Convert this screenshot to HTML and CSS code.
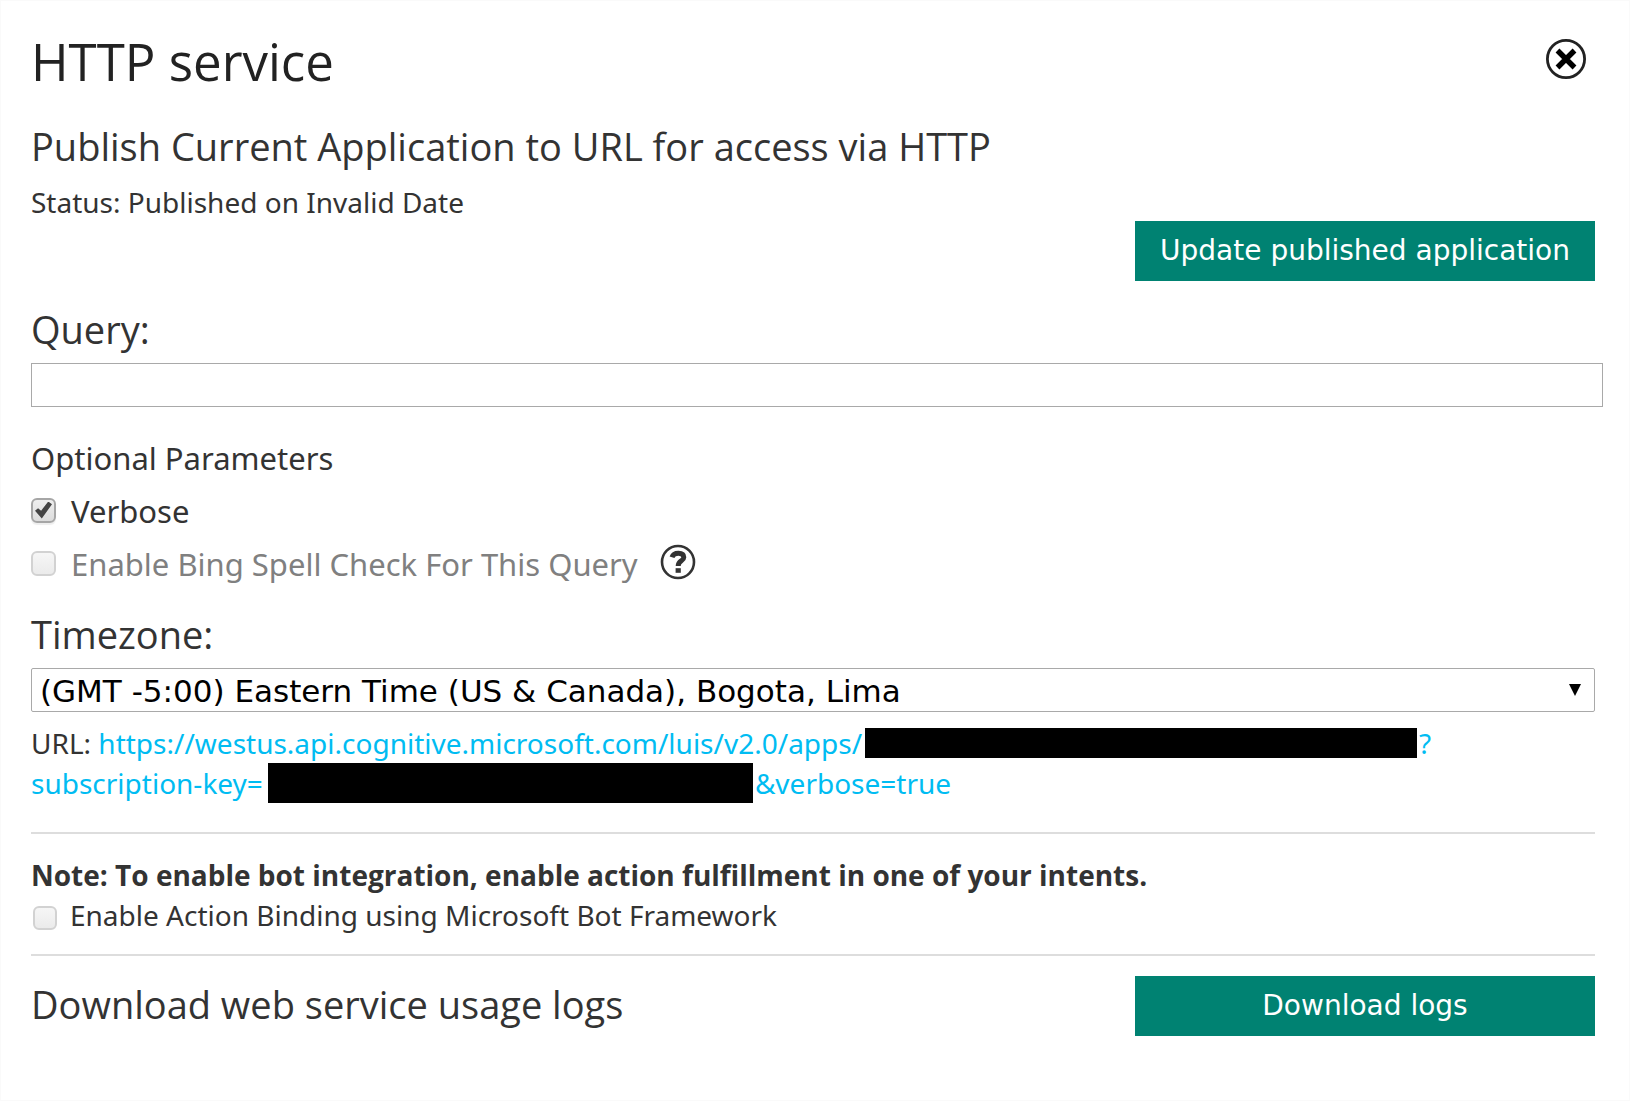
FILE: index.html
```
<!DOCTYPE html>
<html lang="en">
<head>
<meta charset="utf-8">
<title>HTTP service</title>
<link rel="stylesheet" href="styles.css">
</head>
<body>
<main class="panel">
  <header class="panel-header">
    <h1 class="title">HTTP service</h1>
    <button class="icon-button close" type="button" aria-label="Close">
      <svg width="40" height="40" viewBox="0 0 40 40" aria-hidden="true">
        <circle cx="20" cy="20" r="18.6" fill="none" stroke="#222" stroke-width="2.8"/>
        <path d="M11.5 11.5L28.5 28.5M28.5 11.5L11.5 28.5" fill="none" stroke="#000" stroke-width="5.4"/>
      </svg>
    </button>
  </header>

  <section class="publish">
    <h2 class="heading">Publish Current Application to URL for access via HTTP</h2>
    <p class="status">Status: Published on Invalid Date</p>
    <button class="action" type="button">Update published application</button>
  </section>

  <form class="query-form">
    <label class="heading" for="query">Query:</label>
    <input class="query" id="query" type="text">

    <fieldset class="options">
      <legend class="option-text">Optional Parameters</legend>
      <div class="option">
        <input class="check" id="verbose" type="checkbox" checked>
        <label class="option-text" for="verbose">Verbose</label>
      </div>
      <div class="option">
        <input class="check" id="spell" type="checkbox" disabled>
        <label class="option-text muted" for="spell">Enable Bing Spell Check For This Query</label>
        <button class="icon-button" type="button" aria-label="Help">
          <svg width="36" height="36" viewBox="0 0 36 36" aria-hidden="true">
            <circle cx="18" cy="18" r="16" fill="none" stroke="#333" stroke-width="2.6"/>
            <path d="M12 13.2C13 10.2 15.4 9.2 18.4 9.2C22 9.2 23.8 10.8 23.8 13.2C23.8 17 18.2 16.8 18.2 22" fill="none" stroke="#333" stroke-width="5"/>
            <path d="M15.6 24.2h5.2v4.6h-5.2z" fill="#333"/>
          </svg>
        </button>
      </div>
    </fieldset>

    <label class="heading" for="timezone">Timezone:</label>
    <div class="select-wrap">
      <select class="timezone" id="timezone">
        <option>(GMT -5:00) Eastern Time (US &amp; Canada), Bogota, Lima</option>
      </select>
      <svg class="arrow" width="12" height="12" viewBox="0 0 12 12" aria-hidden="true"><path d="M0 0H12L6 12Z"/></svg>
    </div>
  </form>

  <p class="url">URL: <a class="link" href="#">https://westus.api.cognitive.microsoft.com/luis/v2.0/apps/<span class="redacted app-id"></span>?<br>subscription-key=<span class="redacted key"></span>&amp;verbose=true</a></p>

  <section class="bot">
    <p class="note">Note: To enable bot integration, enable action fulfillment in one of your intents.</p>
    <div class="binding">
      <input class="check" id="binding" type="checkbox" disabled>
      <label for="binding">Enable Action Binding using Microsoft Bot Framework</label>
    </div>
  </section>

  <section class="logs">
    <h2 class="heading">Download web service usage logs</h2>
    <button class="action" type="button">Download logs</button>
  </section>
</main>
</body>
</html>
```
FILE: styles.css
```
* {
  box-sizing: border-box;
}

body {
  margin: 0;
  background: #fff;
  color: #333;
  font: 28px/40px "Noto Sans", "Open Sans", sans-serif;
}

h1, h2, p {
  margin: 0;
  font-weight: 400;
}

.panel {
  min-height: 100vh;
  padding: 28px 34px 28px 30px;
  border: 1px solid #fafafa;
}

.panel-header {
  display: flex;
  justify-content: space-between;
  align-items: flex-start;
  padding-right: 9px;
}

.title {
  color: #222;
  font-family: "Open Sans", sans-serif;
  font-size: 51px;
  line-height: 64px;
}

.icon-button {
  display: flex;
  padding: 0;
  border: 0;
  background: none;
}

.close {
  margin-top: 10px;
}

.heading {
  display: block;
  font-family: "Open Sans", sans-serif;
  font-size: 38px;
  line-height: 56px;
}

.publish {
  display: flex;
  flex-direction: column;
  margin-top: 25px;
}

.status {
  margin-top: 8px;
}

.action {
  align-self: flex-end;
  width: 460px;
  height: 60px;
  padding: 0;
  border: 0;
  background: #008272;
  color: #fff;
  font: 28px/40px "DejaVu Sans", sans-serif;
}

.publish .action {
  margin-top: -1px;
}

.query-form {
  margin-top: 20px;
}

.query {
  display: block;
  width: calc(100% + 8px);
  height: 44px;
  margin-top: 6px;
  padding: 0 8px;
  border: 1px solid #a9a9a9;
  font: inherit;
}

.options {
  display: flex;
  flex-direction: column;
  gap: 9px;
  margin: 29px 0 20px;
  padding: 0;
  border: 0;
}

.options legend {
  padding: 0 0 9px;
}

.option-text {
  font-size: 31px;
  line-height: 44px;
}

.muted {
  color: #808080;
}

.option {
  display: flex;
  align-items: center;
}

.option .icon-button {
  margin: 0 0 4px 22px;
}

.check {
  appearance: none;
  display: grid;
  place-items: center;
  width: 25px;
  height: 25px;
  margin: 0 15px 2px 0;
  border: 2px solid #a6a6a6;
  border-radius: 6px;
  background: linear-gradient(#eee, #dcdcdc);
  box-shadow: 0 2px 1px #eee;
}

.check:disabled {
  border-color: #d2d2d2;
  background: linear-gradient(#f6f6f6, #ebebeb);
  box-shadow: none;
}

.check:checked::before {
  content: "";
  width: 17px;
  height: 17px;
  background: #444;
  clip-path: polygon(0 55%, 18% 40%, 36% 54%, 78% 0, 100% 16%, 40% 100%);
}

.select-wrap {
  display: grid;
  align-items: center;
  margin-top: 6px;
}

.select-wrap > * {
  grid-area: 1 / 1;
}

.timezone {
  appearance: none;
  width: 100%;
  height: 44px;
  padding: 2px 40px 0 8px;
  border: 1px solid #a9a9a9;
  border-radius: 2px;
  background: #fff;
  color: #000;
  font: 31px/40px "DejaVu Sans", sans-serif;
}

.arrow {
  justify-self: end;
  margin-right: 14px;
  pointer-events: none;
}

.url {
  margin-top: 11px;
}

.link {
  color: #00bcf2;
  text-decoration: none;
}

.redacted {
  display: inline-block;
  background: #000;
}

.app-id {
  width: 552px;
  height: 30px;
  margin: 0 2px 0 3px;
  vertical-align: -4px;
}

.key {
  width: 485px;
  height: 40px;
  margin: 0 2px 0 5px;
  vertical-align: -9px;
}

.bot {
  margin-top: 29px;
  padding: 21px 0 19px;
  border: solid #ddd;
  border-width: 2px 0;
}

.note {
  font-family: "Open Sans", sans-serif;
  font-weight: 700;
}

.binding {
  display: flex;
  align-items: center;
}

.binding .check {
  width: 24px;
  height: 24px;
  margin: 6px 13px 0 2px;
}

.logs {
  display: flex;
  justify-content: space-between;
  margin-top: 20px;
}
```
